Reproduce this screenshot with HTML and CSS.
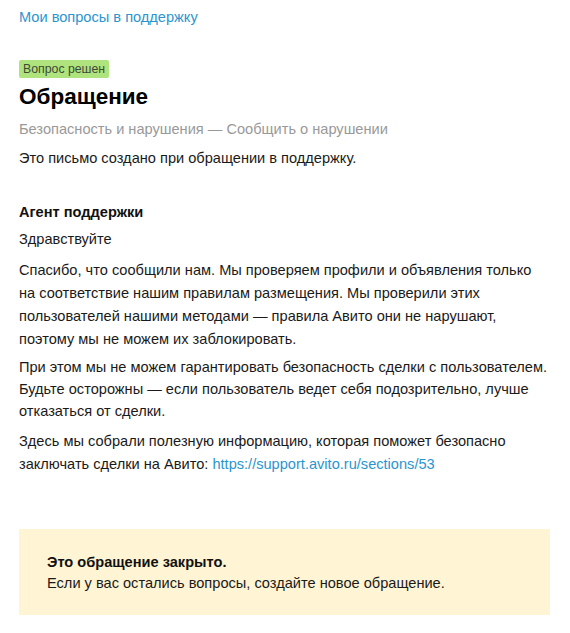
FILE: index.html
```html
<!DOCTYPE html>
<html lang="ru">
<head>
<meta charset="utf-8">
<link rel="stylesheet" href="styles.css">
</head>
<body>
<div class="page">
  <a class="back" href="#">Мои вопросы в поддержку</a>
  <div class="badge">Вопрос решен</div>
  <h1 class="title">Обращение</h1>
  <div class="category">Безопасность и нарушения — Сообщить о нарушении</div>
  <p class="intro">Это письмо создано при обращении в поддержку.</p>
  <div class="message">
    <div class="author">Агент поддержки</div>
    <p class="text greet">Здравствуйте</p>
    <p class="text p1">Спасибо, что сообщили нам. Мы проверяем профили и объявления только на соответствие нашим правилам размещения. Мы проверили этих пользователей нашими методами — правила Авито они не нарушают, поэтому мы не можем их заблокировать.</p>
    <p class="text p2">При этом мы не можем гарантировать безопасность сделки с пользователем. Будьте осторожны — если пользователь ведет себя подозрительно, лучше отказаться от сделки.</p>
    <p class="text p3">Здесь мы собрали полезную информацию, которая поможет безопасно заключать сделки на Авито: <a class="link" href="#">https://support.avito.ru/sections/53</a></p>
  </div>
  <div class="closed">
    <div class="closed-title">Это обращение закрыто.</div>
    <div class="closed-text">Если у вас остались вопросы, создайте новое обращение.</div>
  </div>
</div>
</body>
</html>
```
FILE: styles.css
```css
html, body {
  margin: 0;
  padding: 0;
  background: #fff;
}
.page {
  font-family: "Liberation Sans", Arial, sans-serif;
  font-size: 14.6px;
  color: #1a1a1a;
  width: 531px;
  padding: 7px 0 0 19px;
  display: flex;
  flex-direction: column;
  align-items: flex-start;
}
.back {
  color: #2b95cf;
  text-decoration: none;
  line-height: 20px;
}
.badge {
  margin-top: 33px;
  height: 18px;
  line-height: 18px;
  padding: 0 4px;
  font-size: 12.3px;
  background: #aee37e;
  color: #3e4a36;
  border-radius: 2px;
}
.title {
  margin: 5px 0 0;
  font-size: 22.5px;
  line-height: 28px;
  font-weight: bold;
  color: #000;
}
.category {
  margin-top: 8px;
  line-height: 20px;
  color: #999;
}
.intro {
  margin: 9px 0 0;
  line-height: 20px;
}
.message {
  margin-top: 34px;
  width: 530px;
  display: flex;
  flex-direction: column;
}
.author {
  font-weight: bold;
  line-height: 20px;
  color: #111;
}
.text {
  margin: 0;
  line-height: 23px;
}
.greet {
  margin-top: 6px;
}
.p1 {
  margin-top: 8px;
}
.p2 {
  margin-top: 5px;
  line-height: 22px;
}
.p3 {
  margin-top: 8px;
}
.link {
  color: #2b95cf;
  text-decoration: none;
}
.closed {
  align-self: stretch;
  margin-top: 53px;
  background: #fff4d3;
  padding: 23px 28px 21px;
  display: flex;
  flex-direction: column;
}
.closed-title {
  font-weight: bold;
  line-height: 21px;
  color: #111;
}
.closed-text {
  line-height: 21px;
}
```
